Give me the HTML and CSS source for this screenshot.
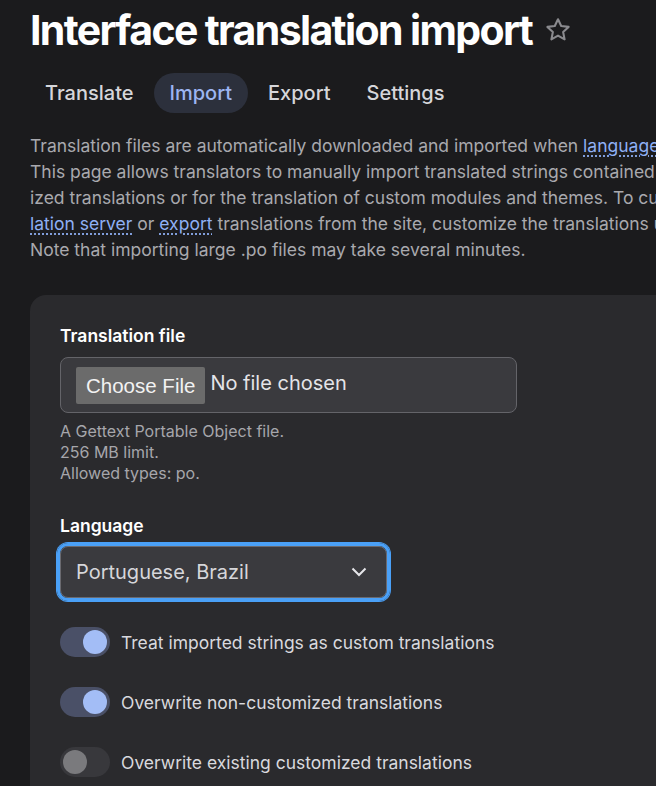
FILE: index.html
```html
<!DOCTYPE html>
<html lang="en">
<head>
    <title>Interface translation import</title>
    <link rel="stylesheet" href="styles.css">
</head>
<body>
<div class="page">
    <div class="page-title">
        <h1>Interface translation import</h1>
        <button class="shortcut" type="button" title="Add to Default shortcuts">
            <svg width="28" height="28" viewBox="0 0 24 24" fill="none" stroke="#8a8a8e" stroke-width="1.8" stroke-linejoin="round">
                <path d="M12 2.8l2.75 5.8 6.35.75-4.7 4.35 1.25 6.3L12 16.85 6.35 20l1.25-6.3L2.9 9.35l6.35-.75z"/>
            </svg>
        </button>
    </div>

    <nav class="tabs">
        <a href="#">Translate</a>
        <a href="#" class="active">Import</a>
        <a href="#">Export</a>
        <a href="#">Settings</a>
    </nav>

    <div class="help">
        <p>Translation files are automatically downloaded and imported when <a href="#">languages</a> are added, or when modules or themes are enabled.</p>
        <p>This page allows translators to manually import translated strings contained in a Gettext Portable Object (.po) file. Manual import may be used for custom-<br>ized translations or for the translation of custom modules and themes. To customize translations you can download a translation file from the <a href="#">Drupal trans-<br>lation server</a> or <a href="#">export</a> translations from the site, customize the translations using a specialized editor, and import the result using this page.</p>
        <p>Note that importing large .po files may take several minutes.</p>
    </div>

    <form class="card">
        <div class="field">
            <label for="file">Translation file</label>
            <input type="file" id="file" class="file-input" accept=".po">
            <div class="field-desc">
                A Gettext Portable Object file.<br>
                256 MB limit.<br>
                Allowed types: po.
            </div>
        </div>

        <div class="field field-language">
            <label for="langcode">Language</label>
            <div class="select-wrap">
                <select id="langcode" class="select">
                    <option>English</option>
                    <option selected>Portuguese, Brazil</option>
                    <option>Spanish</option>
                </select>
                <svg class="chevron" width="16" height="10" viewBox="0 0 16 10" fill="none" stroke="#e6e6ea" stroke-width="2">
                    <path d="M1.5 1.5L8 8l6.5-6.5"/>
                </svg>
            </div>
        </div>

        <div class="toggles">
            <label class="toggle">
                <input type="checkbox" checked>
                <span class="switch"><span class="knob"></span></span>
                <span>Treat imported strings as custom translations</span>
            </label>
            <label class="toggle">
                <input type="checkbox" checked>
                <span class="switch"><span class="knob"></span></span>
                <span>Overwrite non-customized translations</span>
            </label>
            <label class="toggle">
                <input type="checkbox">
                <span class="switch"><span class="knob"></span></span>
                <span>Overwrite existing customized translations</span>
            </label>
        </div>
    </form>
</div>
</body>
</html>
```

FILE: styles.css
```css
html{
    overflow: hidden;
}
body{
    margin: 0;
    background-color: #1b1b1d;
    font-family: Inter, "Noto Sans", sans-serif;
    color: #d6d6da;
}
.page{
    width: 1400px;
    padding: 5px 0 0 30px;
}
.page-title{
    display: flex;
    align-items: center;
    gap: 12px;
}
h1{
    margin: 0;
    font-size: 41px;
    line-height: 50px;
    font-weight: 700;
    letter-spacing: -0.04em;
    color: #ffffff;
}
.shortcut{
    display: flex;
    padding: 0;
    border: none;
    background: none;
    cursor: pointer;
}

/* tabs */
.tabs{
    display: flex;
    gap: 4px;
    margin: 18px 0 0 -1px;
}
.tabs a{
    padding: 0 16px;
    line-height: 40px;
    border-radius: 20px;
    font-size: 20px;
    font-weight: 500;
    color: #d6d6da;
    text-decoration: none;
}
.tabs a.active{
    background-color: #2c303c;
    color: #9cb5f2;
}

/* help text */
.help{
    margin-top: 20px;
}
.help p{
    margin: 0;
    font-size: 17.5px;
    line-height: 26px;
    color: #a9a9ae;
    white-space: nowrap;
}
.help a{
    color: #8fb0f5;
    text-decoration: underline dotted;
    text-underline-offset: 4px;
}

/* form card */
.card{
    margin-top: 32px;
    padding: 29px 30px 60px;
    background-color: #2a2a2d;
    border-radius: 16px;
}
.field label{
    display: block;
    font-size: 17.5px;
    line-height: 24px;
    font-weight: 600;
    color: #ffffff;
}
.file-input{
    display: block;
    box-sizing: border-box;
    width: 457px;
    height: 56px;
    margin-top: 9px;
    padding: 9px 15px 8px;
    background-color: #3a3a3e;
    border: 1px solid #646469;
    border-radius: 8px;
    font-family: Inter, sans-serif;
    font-size: 20px;
    color: #e4e4e8;
}
.file-input::file-selector-button{
    height: 37px;
    margin-right: 5px;
    padding: 0 10px;
    vertical-align: -3px;
    border: none;
    border-radius: 2px;
    background-color: #6b6b6b;
    color: #f2f2f2;
    font-family: "Liberation Sans", Arial, sans-serif;
    font-size: 20.5px;
}
.field-desc{
    margin-top: 8px;
    font-size: 16px;
    line-height: 21px;
    color: #a6a6ab;
}
.field-language{
    margin-top: 30px;
}
.select-wrap{
    position: relative;
    width: 327px;
    margin-top: 8px;
}
.select{
    display: block;
    box-sizing: border-box;
    width: 100%;
    height: 52px;
    padding: 0 48px 0 15px;
    appearance: none;
    background-color: #3a3a3e;
    border: 1px solid #6a6a70;
    border-radius: 8px;
    box-shadow: 0 0 0 3px #2a2a2d, 0 0 0 4px #4aa0f7;
    outline: 3px solid #4aa0f7;
    outline-offset: 0;
    font-family: Inter, sans-serif;
    font-size: 20px;
    color: #d6d6da;
}
.chevron{
    position: absolute;
    right: 20px;
    top: 21px;
    pointer-events: none;
}

/* toggles */
.toggles{
    display: flex;
    flex-direction: column;
    gap: 30px;
    margin-top: 29px;
}
.toggle{
    display: flex;
    align-items: center;
    gap: 11px;
    font-size: 17.5px;
    color: #d9d9de;
    cursor: pointer;
}
.toggle input{
    display: none;
}
.switch{
    display: flex;
    align-items: center;
    box-sizing: border-box;
    width: 50px;
    height: 30px;
    padding: 0 3px;
    border-radius: 15px;
    background-color: #38383c;
}
.knob{
    width: 24px;
    height: 24px;
    border-radius: 50%;
    background-color: #7a7a7d;
}
.toggle input:checked + .switch{
    justify-content: flex-end;
    background-color: #4a5067;
}
.toggle input:checked + .switch .knob{
    background-color: #a3bdf6;
}
```
